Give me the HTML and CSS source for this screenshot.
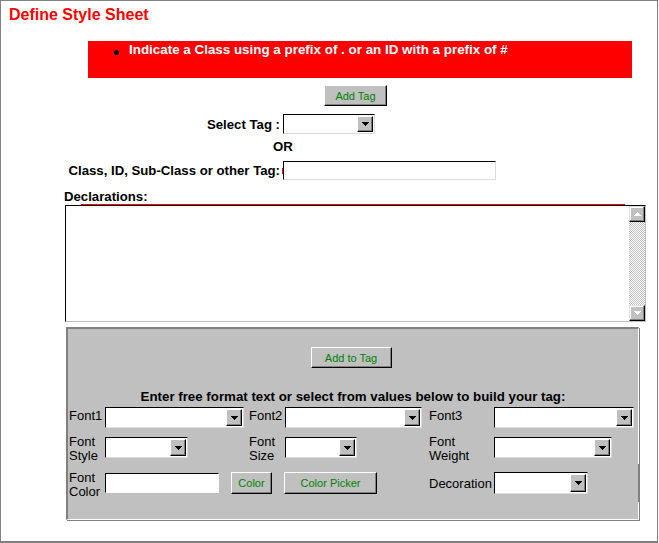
FILE: index.html
```html
<!DOCTYPE html>
<html>
<head>
<meta charset="utf-8">
<title>Define Style Sheet</title>
<link rel="stylesheet" href="styles.css">
</head>
<body>
<div class="page">
  <h1 class="title">Define Style Sheet</h1>
  <div class="notice">
    <ul><li>Indicate a Class using a prefix of . or an ID with a prefix of #</li></ul>
  </div>
  <div class="add-row"><button class="btn btn-add">Add Tag</button></div>
  <div class="field-row row-select">
    <span class="field-label">Select Tag :</span>
    <span class="select sel-tag"><span class="arrow"><svg width="7" height="4" viewBox="0 0 7 4"><path d="M0 0h7v1H0zM1 1h5v1H1zM2 2h3v1H2zM3 3h1v1H3z"/></svg></span></span>
  </div>
  <div class="or">OR</div>
  <div class="field-row row-class">
    <span class="field-label">Class, ID, Sub-Class or other Tag:</span>
    <span class="input input-class"></span>
  </div>
  <div class="decl-label">Declarations:</div>
  <div class="textarea">
    <div class="scrollbar">
      <span class="sb-btn"><svg width="7" height="4" viewBox="0 0 7 4"><path d="M3 0h1v1H3zM2 1h3v1H2zM1 2h5v1H1zM0 3h7v1H0z"/></svg></span>
      <span class="sb-track"></span>
      <span class="sb-btn"><svg width="7" height="4" viewBox="0 0 7 4"><path d="M0 0h7v1H0zM1 1h5v1H1zM2 2h3v1H2zM3 3h1v1H3z"/></svg></span>
    </div>
  </div>
  <div class="panel">
    <div class="panel-btn-row"><button class="btn btn-addto">Add to Tag</button></div>
    <div class="panel-heading">Enter free format text or select from values below to build your tag:</div>
    <div class="attrs">
      <span class="attr-label r1">Font1</span>
      <span class="select w139"><span class="arrow"><svg width="7" height="4" viewBox="0 0 7 4"><path d="M0 0h7v1H0zM1 1h5v1H1zM2 2h3v1H2zM3 3h1v1H3z"/></svg></span></span>
      <span class="attr-label r1">Font2</span>
      <span class="select w137"><span class="arrow"><svg width="7" height="4" viewBox="0 0 7 4"><path d="M0 0h7v1H0zM1 1h5v1H1zM2 2h3v1H2zM3 3h1v1H3z"/></svg></span></span>
      <span class="attr-label r1">Font3</span>
      <span class="select w140"><span class="arrow"><svg width="7" height="4" viewBox="0 0 7 4"><path d="M0 0h7v1H0zM1 1h5v1H1zM2 2h3v1H2zM3 3h1v1H3z"/></svg></span></span>

      <span class="attr-label">Font<br>Style</span>
      <span class="select w83 r2"><span class="arrow"><svg width="7" height="4" viewBox="0 0 7 4"><path d="M0 0h7v1H0zM1 1h5v1H1zM2 2h3v1H2zM3 3h1v1H3z"/></svg></span></span>
      <span class="attr-label">Font<br>Size</span>
      <span class="select w72 r2"><span class="arrow"><svg width="7" height="4" viewBox="0 0 7 4"><path d="M0 0h7v1H0zM1 1h5v1H1zM2 2h3v1H2zM3 3h1v1H3z"/></svg></span></span>
      <span class="attr-label">Font<br>Weight</span>
      <span class="select w118 r2"><span class="arrow"><svg width="7" height="4" viewBox="0 0 7 4"><path d="M0 0h7v1H0zM1 1h5v1H1zM2 2h3v1H2zM3 3h1v1H3z"/></svg></span></span>

      <span class="attr-label r3">Font<br>Color</span>
      <span class="color-cell r3c">
        <span class="input input-color"></span>
        <button class="btn btn-color">Color</button>
      </span>
      <span class="r3c picker-cell"><button class="btn btn-picker">Color Picker</button></span>
      <span class="attr-label deco-label">Decoration</span>
      <span class="select w94 r3c deco-select"><span class="arrow"><svg width="7" height="4" viewBox="0 0 7 4"><path d="M0 0h7v1H0zM1 1h5v1H1zM2 2h3v1H2zM3 3h1v1H3z"/></svg></span></span>
    </div>
  </div>
</div>
</body>
</html>
```
FILE: styles.css
```css
html, body {
  margin: 0;
  padding: 0;
  background: #fff;
}

.page {
  box-sizing: border-box;
  width: 658px;
  height: 543px;
  border: 1px solid #808080;
  border-bottom-width: 2px;
  font-family: "Liberation Sans", Arial, sans-serif;
  color: #000;
}

.title {
  margin: 5px 0 0 8px;
  font-size: 16px;
  line-height: 18px;
  font-weight: bold;
  color: #ff0000;
}

.notice {
  margin: 17px 0 0 87px;
  width: 544px;
  height: 37px;
  background: #ff0000;
  color: #fff;
  font-size: 13.4px;
  line-height: 15px;
  font-weight: bold;
}

.notice ul {
  margin: 0;
  padding: 1px 0 0 41px;
  list-style: none;
}

.notice li {
  position: relative;
}

.notice li::before {
  content: "";
  position: absolute;
  left: -15px;
  top: 8px;
  width: 5px;
  height: 5px;
  border-radius: 50%;
  background: #000;
}

.btn {
  box-sizing: border-box;
  display: inline-flex;
  align-items: center;
  justify-content: center;
  padding: 0;
  margin: 0;
  font-family: "Liberation Sans", Arial, sans-serif;
  font-size: 11px;
  color: #008000;
  background: #c0c0c0;
  border: 1px solid;
  border-color: #fff #000 #000 #fff;
  box-shadow: inset -1px -1px 0 #808080;
}

.add-row {
  margin-top: 7px;
  padding-left: 323px;
  height: 21px;
}

.btn-add {
  width: 63px;
  height: 21px;
}

.field-row {
  display: flex;
  align-items: center;
  font-size: 13.2px;
  font-weight: bold;
  line-height: 15px;
}

.field-label {
  width: 279px;
  text-align: right;
  margin-right: 3px;
}

.row-select {
  margin-top: 8px;
}

.row-class {
  margin-top: 7px;
}

.select {
  box-sizing: border-box;
  display: inline-flex;
  justify-content: flex-end;
  align-items: stretch;
  height: 21px;
  padding: 1px;
  background: #fff;
  border: 1px solid;
  border-color: #000 #dcdcdc #dcdcdc #000;
}

.sel-tag {
  width: 92px;
  height: 20px;
}

.arrow {
  box-sizing: border-box;
  width: 16px;
  display: flex;
  align-items: center;
  justify-content: center;
  background: #c0c0c0;
  border: 1px solid;
  border-color: #fff #000 #000 #fff;
  box-shadow: inset -1px -1px 0 #808080;
}

.arrow svg,
.sb-btn svg {
  display: block;
  fill: #000;
}

.or {
  margin-top: 5px;
  padding-left: 272px;
  font-size: 13.2px;
  line-height: 15px;
  font-weight: bold;
}

.input {
  position: relative;
  box-sizing: border-box;
  display: inline-block;
  background: #fff;
  border: 1px solid;
  border-color: #000 #dcdcdc #dcdcdc #000;
}

.input-class {
  width: 213px;
  height: 19px;
}

.input-class::before {
  content: "";
  position: absolute;
  left: -2px;
  top: 6px;
  width: 1px;
  height: 6px;
  background: #ff0000;
}

.decl-label {
  margin-top: 9px;
  padding-left: 63px;
  font-size: 13.2px;
  line-height: 15px;
  font-weight: bold;
}

.textarea {
  position: relative;
  box-sizing: border-box;
  margin: 1px 0 0 64px;
  width: 581px;
  height: 117px;
  background: #fff;
  border: 1px solid;
  border-color: #000 #c0c0c0 #c0c0c0 #000;
  display: flex;
  justify-content: flex-end;
}

.textarea::before {
  content: "";
  position: absolute;
  left: 15px;
  right: 20px;
  top: -2px;
  height: 1px;
  background: #ff0000;
}

.scrollbar {
  width: 16px;
  display: flex;
  flex-direction: column;
}

.sb-btn {
  box-sizing: border-box;
  height: 16px;
  display: flex;
  align-items: center;
  justify-content: center;
  background: #c0c0c0;
  border: 1px solid;
  border-color: #dfdfdf #000 #000 #dfdfdf;
  box-shadow: inset -1px -1px 0 #808080, inset 1px 1px 0 #fff;
}

.sb-btn svg {
  fill: #fff;
}

.sb-track {
  flex: 1;
  background-image: repeating-conic-gradient(#c0c0c0 0% 25%, #fff 0% 50%);
  background-size: 2px 2px;
}

.panel {
  margin: 5px 0 0 65px;
  width: 570px;
  padding-bottom: 21px;
  background: #c0c0c0;
  border-top: 2px solid #808080;
  border-left: 2px solid #808080;
  border-right: 1px solid #fff;
  border-bottom: 1px solid #fff;
  box-shadow: 1px 1px 0 #808080;
}

.panel-btn-row {
  margin-top: 18px;
  display: flex;
  justify-content: center;
  height: 21px;
}

.btn-addto {
  width: 81px;
  height: 21px;
  margin-left: -4px;
}

.panel-heading {
  margin-top: 21px;
  text-align: center;
  font-size: 13.3px;
  line-height: 15px;
  font-weight: bold;
}

.attrs {
  display: grid;
  grid-template-columns: 36px 144px 36px 144px 65px 1fr;
  row-gap: 7px;
  align-items: start;
  margin-top: 3px;
  padding-left: 1px;
  font-size: 13px;
  line-height: 13.5px;
}

.attr-label {
  white-space: nowrap;
}

.r1 {
  margin-top: 2px;
}

.r2 {
  margin-top: 2px;
}

.r3 {
  margin-top: 2px;
}

.r3c {
  margin-top: 3px;
}

.deco-label {
  margin-top: 8px;
}

.w139 { width: 139px; }
.w137 { width: 137px; }
.w140 { width: 140px; }
.w83 { width: 83px; }
.w72 { width: 72px; }
.w118 { width: 118px; }
.w94 { width: 94px; height: 22px; }

.deco-select {
  position: relative;
}

.deco-select::after {
  content: "";
  position: absolute;
  left: 143px;
  top: -9px;
  width: 1px;
  height: 38px;
  background: #808080;
}

.color-cell {
  grid-column: 2 / 4;
  display: flex;
  align-items: start;
  gap: 12px;
}

.input-color {
  width: 114px;
  height: 20px;
  margin-top: 1px;
  border-color: #000 #fff #fff #000;
}

.btn-color {
  width: 41px;
  height: 22px;
}

.picker-cell {
  margin-left: -1px;
}

.btn-picker {
  width: 93px;
  height: 22px;
}
```
